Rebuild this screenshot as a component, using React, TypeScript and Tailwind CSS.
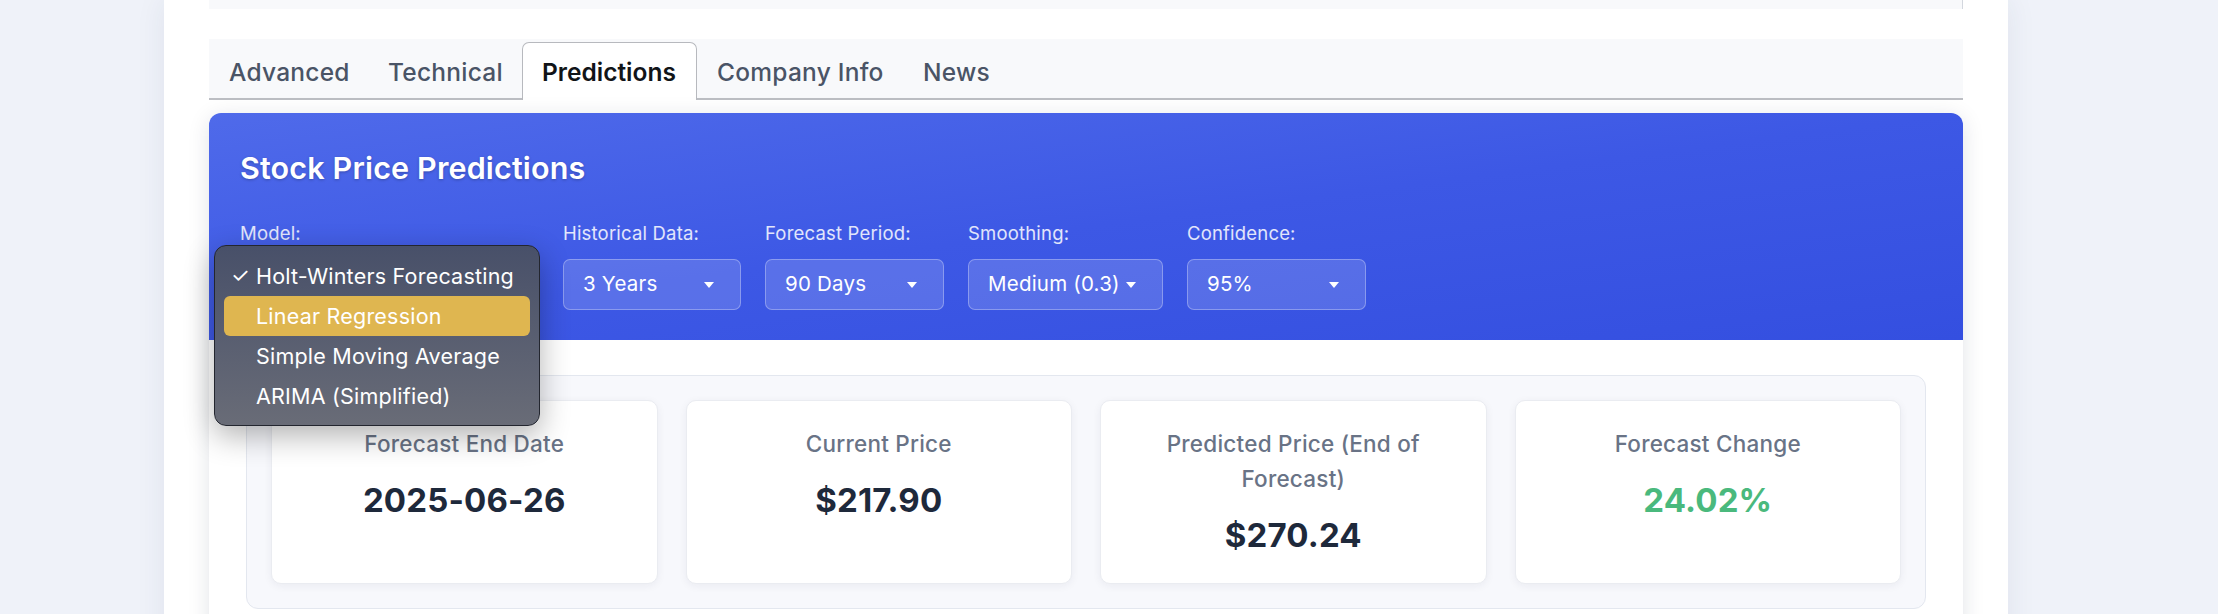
import React from 'react';

const tabs = [
  { name: 'Advanced', width: 'w-[159px]' },
  { name: 'Technical', width: 'w-[154px]' },
  { name: 'Predictions', width: 'w-[175px]' },
  { name: 'Company Info', width: 'w-[206px]' },
  { name: 'News', width: 'w-[106px]' },
];

const filters = [
  { label: 'Model:', value: 'Holt-Winters Forecasting', width: 'w-[299px]' },
  { label: 'Historical Data:', value: '3 Years', width: 'w-[178px]' },
  { label: 'Forecast Period:', value: '90 Days', width: 'w-[179px]' },
  { label: 'Smoothing:', value: 'Medium (0.3)', width: 'w-[195px]' },
  { label: 'Confidence:', value: '95%', width: 'w-[179px]' },
];

const modelOptions = [
  'Holt-Winters Forecasting',
  'Linear Regression',
  'Simple Moving Average',
  'ARIMA (Simplified)',
];

const stats = [
  { label: 'Forecast End Date', value: '2025-06-26', color: 'text-[#1e293b]' },
  { label: 'Current Price', value: '$217.90', color: 'text-[#1e293b]' },
  { label: 'Predicted Price (End of Forecast)', value: '$270.24', color: 'text-[#1e293b]' },
  { label: 'Forecast Change', value: '24.02%', color: 'text-[#4ab97d]' },
];

const Caret = () => (
  <span className="inline-block h-0 w-0 shrink-0 border-x-[5px] border-t-[6px] border-x-transparent border-t-white" />
);

// native-looking popup of the Model select, open over the panel
const ModelMenu = () => (
  <div className="absolute left-[5px] top-[132px] z-20 w-[326px] rounded-[12px] border border-[#23262f] bg-gradient-to-b from-[#485069] to-[#696c77] px-[9px] pt-[10px] pb-[9px] shadow-[0_10px_30px_rgba(0,0,0,0.3)]">
    {modelOptions.map((opt, i) => (
      <div
        key={opt}
        className={`relative flex h-[40px] items-center rounded-[6px] pl-[32px] text-[21.5px] tracking-[0.01em] text-white ${
          i === 1 ? 'bg-[#dfb650]' : ''
        }`}
      >
        {i === 0 ? <span className="absolute left-[7px] text-[21px]">✓</span> : null}
        {opt}
      </div>
    ))}
  </div>
);

export default function App() {
  return (
    <div className="h-[614px] w-full overflow-hidden bg-[#eff2f9] font-['Inter','Noto_Sans',sans-serif]">
      <div className="ml-[164px] min-h-[614px] w-[1844px] bg-white px-[45px] shadow-[0_0_28px_rgba(40,50,90,0.08)]">
        {/* bottom of the block above */}
        <div className="h-[9px] border-r border-[#d3d7de] bg-[#f8f9fb]" />

        {/* tabs */}
        <div className="mt-[30px] flex h-[61px] items-end border-b-2 border-[#bcbec3] bg-[#f8f9fb]">
          {tabs.map((t) =>
            t.name === 'Predictions' ? (
              <div
                key={t.name}
                className={`-mb-[2px] flex h-[58px] items-center rounded-t-[7px] border border-b-0 border-[#b7b9be] bg-white pl-[19px] pt-[1px] text-[24.5px] font-semibold text-[#111418] ${t.width}`}
              >
                {t.name}
              </div>
            ) : (
              <div
                key={t.name}
                className={`flex h-[56px] items-center pl-[20px] pt-[5px] text-[24.5px] font-medium tracking-[0.01em] text-[#4a5466] ${t.width}`}
              >
                {t.name}
              </div>
            ),
          )}
        </div>

        {/* predictions panel */}
        <div className="relative mt-[13px] rounded-[12px] bg-white shadow-[0_4px_22px_rgba(20,30,60,0.12)]">
          <div className="relative rounded-t-[12px] bg-gradient-to-br from-[#4f6aea] via-[#3d58e5] to-[#344fe0] px-[31px] pt-[37px] pb-[30px]">
            <h2 className="text-[30.5px] font-semibold leading-[36px] tracking-[0.005em] text-white [text-shadow:0_1px_3px_rgba(0,0,0,0.25)]">
              Stock Price Predictions
            </h2>
            <div className="mt-[34px] flex gap-[24px]">
              {filters.map((f) => (
                <div key={f.label} className="flex flex-col">
                  <span className="text-[18.5px] leading-[27px] tracking-[0.01em] text-white/85">{f.label}</span>
                  <div
                    className={`mt-[12px] flex h-[51px] items-center justify-between gap-[2px] rounded-[7px] border border-white/30 bg-white/15 pl-[19px] pr-[26px] text-[20.5px] tracking-[0.01em] text-white ${f.width}`}
                  >
                    <span className="whitespace-nowrap">{f.value}</span>
                    <Caret />
                  </div>
                </div>
              ))}
            </div>
            <ModelMenu />
          </div>

          <div className="px-[37px] pt-[35px] pb-[37px]">
            <div className="grid grid-cols-4 gap-[28px] rounded-[12px] border border-[#e3e7ef] bg-[#f7f8fc] p-6">
              {stats.map((s) => (
                <div
                  key={s.label}
                  className="rounded-[10px] border border-[#eaecf1] bg-white px-[30px] pt-[25px] pb-[29px] text-center shadow-[0_2px_8px_rgba(30,40,70,0.06)]"
                >
                  <div className="text-[22.5px] font-medium leading-[35px] tracking-[0.01em] text-[#697386]">{s.label}</div>
                  <div className={`mt-[20px] text-[33px] font-bold leading-[38px] tracking-[0.005em] ${s.color}`}>{s.value}</div>
                </div>
              ))}
            </div>
          </div>
        </div>
      </div>
    </div>
  );
}
